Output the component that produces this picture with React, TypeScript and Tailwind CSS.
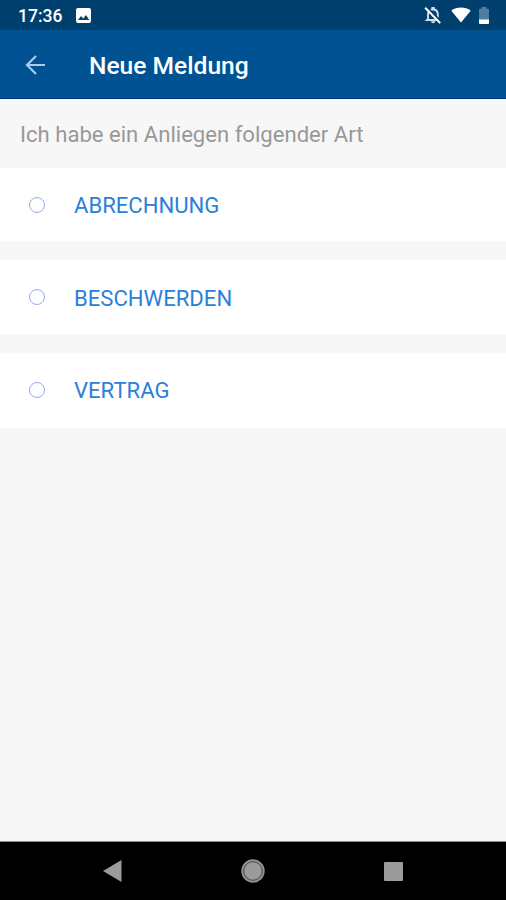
function StatusBar() {
  return (
    <div className="flex h-[30px] shrink-0 items-center bg-[#00406f] text-white">
      <span className="ml-[18px] w-[58px] pt-[2px] text-[17.5px] leading-[30px] font-medium">17:36</span>
      <svg className="mt-px h-[15px] w-[15px]" viewBox="0 0 15 15">
        <rect width="15" height="15" rx="2" fill="#fff" />
        <path d="M2 12 5 8l2.3 2.6L10 7l3.3 5Z" fill="#00406f" />
      </svg>
      <svg className="mr-[8px] ml-auto h-[20px] w-[20px]" viewBox="0 0 20 20" fill="none">
        <path d="M5 14V9.5C5 6.5 6.8 4.8 9.4 4.5V3h1.4v1.5c2.5.3 4 2 4 5V14l1 1H4Z" stroke="#d5deeb" strokeWidth="1.9" />
        <path d="M8 16.2h4.2c0 2.6-4.2 2.6-4.2 0Z" fill="#d5deeb" />
        <path d="m3.5 1.6 15 15.4" stroke="#00406f" strokeWidth="1.8" />
        <path d="m2.2 2.7 15 15.4" stroke="#fff" strokeWidth="2" />
      </svg>
      <svg className="mr-[8px] h-[16px] w-[20px]" viewBox="0 0 20 16">
        <path d="M.3 3.8C5.4-.6 14.6-.6 19.7 3.8L10 15.5Z" fill="#fff" />
      </svg>
      <svg className="mt-px mr-[17px] h-[17px] w-[10px]" viewBox="0 0 10 17">
        <path d="M0 2.5Q0 1.7 1 1.7h1.5V0h5v1.7H9q1 0 1 .8V13H0Z" fill="#507d9f" />
        <path d="M0 12.5h10V16q0 1-1 1H1q-1 0-1-1Z" fill="#fff" />
      </svg>
    </div>
  );
}

function Option({ label, height, offset }: { label: string; height: string; offset: string }) {
  return (
    <button className={`flex w-full shrink-0 items-start bg-white text-left ${height}`}>
      <span className="mt-[29px] ml-[29px] h-[16px] w-[16px] rounded-full border border-[#91adf0]" />
      <span className={`ml-[29px] text-[22.1px] leading-[26px] text-[#2b80d9] ${offset}`}>{label}</span>
    </button>
  );
}

export default function App() {
  return (
    <div className="flex h-[900px] w-[506px] flex-col overflow-hidden bg-[#f7f7f7] font-[Roboto,sans-serif]">
      <StatusBar />
      <header className="flex h-[69px] shrink-0 items-center border-b border-[#003080] bg-[#005293]">
        <svg className="mt-px ml-[25px] h-[20px] w-[21px]" viewBox="0 0 21 20" fill="none" stroke="#a9cdee" strokeWidth="2.2">
          <path d="M20 10H2M11 1 2 10l9 9" />
        </svg>
        <h1 className="ml-[43px] pt-[3px] text-[24.6px] leading-[30px] font-medium text-white">Neue Meldung</h1>
      </header>
      <main className="flex flex-1 flex-col">
        <p className="h-[69px] shrink-0 pt-px pl-[20px] text-[22.1px] leading-[68px] text-[#999]">
          Ich habe ein Anliegen folgender Art
        </p>
        <div className="flex flex-col gap-[19px]">
          <Option label="ABRECHNUNG" height="h-[73px]" offset="mt-[24px]" />
          <Option label="BESCHWERDEN" height="h-[74px]" offset="mt-[25px]" />
          <Option label="VERTRAG" height="h-[75px]" offset="mt-[24px]" />
        </div>
      </main>
      <nav className="flex h-[59px] shrink-0 items-center border-t border-[#8b8b8b] bg-black">
        <svg className="ml-[103px] h-[22px] w-[19px]" viewBox="0 0 19 22">
          <path d="M0 11 18.5 0v22Z" fill="#9b9b9b" />
        </svg>
        <svg className="ml-[119px] h-[24px] w-[24px]" viewBox="0 0 24 24">
          <circle cx="12" cy="12" r="11.7" fill="#929292" />
          <circle cx="12" cy="12" r="9.3" fill="#9b9b9b" stroke="#454545" strokeWidth="1" />
        </svg>
        <span className="ml-[119px] h-[19px] w-[19px] rounded-[1px] bg-[#9b9b9b]" />
      </nav>
    </div>
  );
}
